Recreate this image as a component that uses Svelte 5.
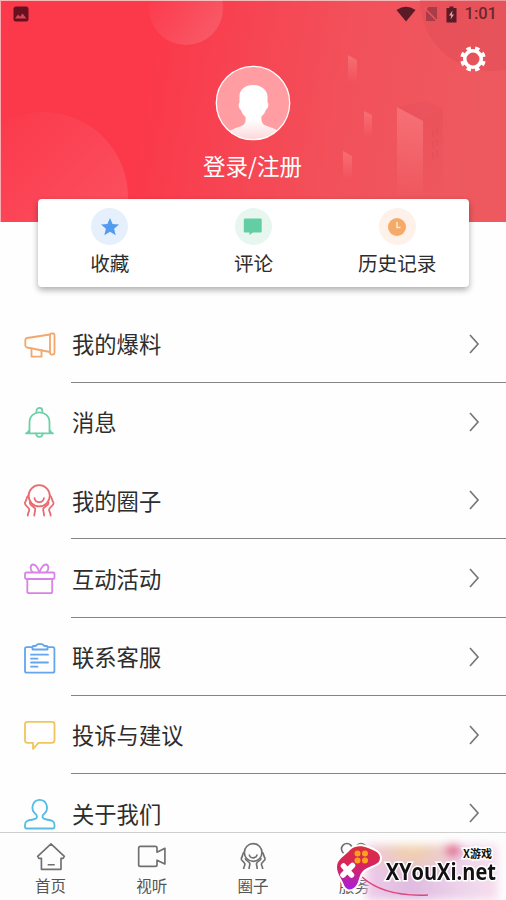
<script lang="ts">
  type Row = { icon: string; label: string; color: string; divider: boolean };

  const shortcuts = [
    { icon: 'star', label: '收藏', tint: 'blue' },
    { icon: 'comment', label: '评论', tint: 'green' },
    { icon: 'clock', label: '历史记录', tint: 'orange' },
  ];

  const rows: Row[] = [
    { icon: 'horn', label: '我的爆料', color: '#f3a76c', divider: true },
    { icon: 'bell', label: '消息', color: '#6fcfa9', divider: false },
    { icon: 'circle', label: '我的圈子', color: '#ea6a72', divider: true },
    { icon: 'gift', label: '互动活动', color: '#d883e6', divider: true },
    { icon: 'clipboard', label: '联系客服', color: '#64a5ec', divider: true },
    { icon: 'bubble', label: '投诉与建议', color: '#efc55f', divider: true },
    { icon: 'person', label: '关于我们', color: '#57bce2', divider: false },
  ];

  const tabs = [
    { icon: 'home', label: '首页' },
    { icon: 'video', label: '视听' },
    { icon: 'circle', label: '圈子' },
    { icon: 'service', label: '服务' },
    { icon: 'more', label: '' },
  ];
</script>

{#snippet people()}
  <circle cx="18.2" cy="13.8" r="10.6" />
  <path d="M13.5 16.200c.8 5.300 8.600 5.300 9.400 0" />
  <path d="M7.500 13.500C5 15 6 18 4 20.500c-1.200 3 3.800 4 4.300 7 .2 2-1.500 3-1.500 6M8.800 20.500c-.3 3.500 4.800 3.500 5.400 6.500.2 2.500-.9 3.500-.9 6.500" />
  <path d="M28.900 13.500c2.500 1.500 1.500 4.500 3.500 7 1.200 3-3.800 4-4.300 7-.2 2 1.500 3 1.500 6M27.600 20.500c.3 3.500-4.800 3.500-5.400 6.500-.2 2.500.9 3.500.9 6.500" />
{/snippet}

<div class="screen">
  <header class="hero">
    <svg class="scenery" viewBox="0 0 506 222" aria-hidden="true">
      <defs>
        <linearGradient id="orb" x1="0" y1="0" x2="1" y2="1">
          <stop offset="0.1" stop-color="#fff" stop-opacity="0" />
          <stop offset="1" stop-color="#fff" stop-opacity="0.15" />
        </linearGradient>
        <linearGradient id="tower" x1="0" y1="0" x2="0" y2="1">
          <stop offset="0" stop-color="#ff9a9c" stop-opacity="0.4" />
          <stop offset="1" stop-color="#ff9a9c" stop-opacity="0" />
        </linearGradient>
        <linearGradient id="shade" x1="0" y1="0" x2="0" y2="1">
          <stop offset="0" stop-color="#d9434f" stop-opacity="0.22" />
          <stop offset="1" stop-color="#d9434f" stop-opacity="0" />
        </linearGradient>
      </defs>
      <circle cx="43" cy="197" r="85" fill="url(#orb)" />
      <circle cx="186" cy="8" r="37" fill="url(#orb)" />
      <circle cx="491" cy="0" r="71" fill="#d9434f" opacity="0.28" />
      <path d="M348 55l9 5v23h-9z" fill="url(#tower)" />
      <path d="M364 111l8 4v22h-8z" fill="url(#tower)" />
      <path d="M343 151l9 5v24h-9z" fill="url(#tower)" />
      <path d="M397 107l26 14v78h-26z" fill="url(#tower)" />
      <path d="M397 107l30-6 16 8-20 12z" fill="#e0505a" opacity="0.3" />
      <path d="M423 121l20-12v90h-20z" fill="url(#shade)" />
      <path d="M433 130v32M437 128v30" stroke="#d9434f" stroke-dasharray="7 4" opacity="0.4" />
    </svg>

    <div class="status">
      <svg class="shot" viewBox="0 0 16 16">
        <rect x="0.500" y="0.500" width="15" height="15" rx="2.500" fill="#67101f" />
        <path d="M2 12.500 5 8.500l2 2.300L9.500 7.500l4 5z" fill="#d44555" />
      </svg>
      <div class="signals">
        <svg width="20" height="16" viewBox="0 0 20 16">
          <path d="M0.500 4Q10-2.500 19.500 4L10 15.500z" fill="#5a1b26" />
        </svg>
        <svg width="14" height="16" viewBox="0 0 14 16">
          <path d="M4.500 1H13v14H2V4z" fill="#a83c48" />
          <path d="M0 1.500 13.500 15.500" stroke="#f05560" stroke-width="1.500" />
        </svg>
        <svg width="11" height="17" viewBox="0 0 11 17">
          <path d="M0.500 2H3.500V0.500h4V2h3v14.500h-10z" fill="#5a1b26" />
          <path d="M6.500 4.500 3 9.500h2.300l-.8 4L8 8.500H5.800z" fill="#f3a0a5" />
        </svg>
        <span class="time">1:01</span>
      </div>
    </div>

    <svg class="gear" viewBox="0 0 26 26">
      <circle cx="13" cy="13" r="8.300" />
      <!-- eight teeth -->
      <circle
        cx="13"
        cy="13"
        r="11"
        pathLength="80"
        stroke-dasharray="5.200 4.800"
        transform="rotate(10.800 13 13)"
      />
    </svg>

    <div class="profile">
      <svg class="avatar" viewBox="0 0 76 76">
        <defs>
          <clipPath id="face"><circle cx="38" cy="38" r="36.500" /></clipPath>
          <linearGradient id="body" x1="0" y1="0" x2="0" y2="1">
            <stop offset="0.600" stop-color="#fff" />
            <stop offset="1" stop-color="#fbd0d2" />
          </linearGradient>
        </defs>
        <circle cx="38" cy="38" r="36.500" fill="#ff9da3" />
        <path
          clip-path="url(#face)"
          d="M38 20c-8 0-14 5-13.500 12v6c-1.500.5-1 6 1.500 7 .8 3 2.500 5 4.500 7 .5 4-.5 7-3 8.500-5 2.500-10 3-14 6V78h50V66c-4-3-9-3.500-14-6-2.500-1.500-3.500-4.500-3-8.500 2-2 3.700-4 4.500-7 2.500-1 3-6.500 1.500-7v-6C52.500 25 46 20 38 20z"
          fill="url(#body)"
        />
        <circle cx="38" cy="38" r="36.700" fill="none" stroke="#fff" stroke-width="1.300" />
      </svg>
      <span class="login">登录/注册</span>
    </div>
  </header>

  <section class="card">
    {#each shortcuts as item}
      <div class="shortcut">
        <span class="badge {item.tint}">
          <svg viewBox="0 0 20 20" fill="currentColor">
            {#if item.icon === 'star'}
              <path d="M10 1l2.600 6 6.400.5-4.900 4.200 1.600 6.500L10 14.700l-5.700 3.500 1.600-6.500L1 7.500 7.400 7z" />
            {:else if item.icon === 'comment'}
              <path d="M2 1.500h15.500q1.200 0 1.200 1.200v11.500q0 1.200-1.200 1.200H10L6.500 18v-2.600H2q-1.200 0-1.200-1.200V2.700Q.8 1.500 2 1.500z" />
            {:else}
              <circle cx="10" cy="10" r="9" />
              <path d="M10 5v5.500h3.500" fill="none" stroke="#ffe9d4" stroke-width="1.600" />
            {/if}
          </svg>
        </span>
        <span class="caption">{item.label}</span>
      </div>
    {/each}
  </section>

  <main class="list">
    {#each rows as row}
      <div class="row">
        <svg class="row-icon" viewBox="0 0 36 36" stroke={row.color}>
          {#if row.icon === 'horn'}
            <path d="M29 8.500 6 12q-1.700.4-1.700 2v5.500q0 1.500 1.700 2L29 26" />
            <rect x="29" y="7.500" width="4.500" height="21" rx="1.500" />
            <path d="M10.500 22.500v8.200h10v-6.500" />
          {:else if row.icon === 'bell'}
            <path d="M8.500 29V18.500c0-13.500 20-13.500 20 0V29M5 29.300h27M5.500 29q2.500-.8 3-3.500M31.500 29q-2.500-.8-3-3.500" />
            <path d="M15.500 8.500V6.500c0-3.400 5.800-3.400 5.800 0v2M15 29.500c.5 4.600 6.300 4.600 6.800 0" />
          {:else if row.icon === 'circle'}
            {@render people()}
          {:else if row.icon === 'gift'}
            <rect x="4" y="12.500" width="29.500" height="6.500" rx="1.500" />
            <path d="M6.300 19v12.500q0 1.700 1.700 1.700h21.500q1.700 0 1.700-1.700V19" />
            <path d="M18.500 12.500C17 8 14.500 4.500 12 4.500s-3.500 5-.5 7.500M18.500 12.500C20 8 22.500 4.500 25 4.500s3.500 5 .5 7.500" />
          {:else if row.icon === 'clipboard'}
            <path d="M11 8.200H5.500Q4 8.200 4 10v22q0 1.700 1.700 1.700h26q1.700 0 1.700-1.700V10q0-1.800-1.700-1.800H27" />
            <path d="M11.500 10.500V8q0-1 1-1h2.300q1-2.200 4.200-2.200T23.200 7h2.300q1 0 1 1v2.500z" />
            <path d="M10 15.700h17M10 19.700h6.500M10 23.500h17M10 27.700h6.500" />
          {:else if row.icon === 'bubble'}
            <path d="M6.500 4.800h24.500q2.500 0 2.500 2.500v16q0 2.500-2.500 2.500H17.500L12 31.800v-6H6.500Q4 25.800 4 23.300v-16q0-2.500 2.500-2.500z" />
          {:else}
            <path d="M15.500 20C8 14.500 12 4.800 18.700 4.800S29.500 14.500 22 20c-1.500 3 .5 4 3.500 4.500 5.500.8 8 1.500 8 5.500v2q0 1.500-1.500 1.500H5.500Q4 33.500 4 32v-2c0-4 2.500-4.700 8-5.500 3-.5 5-1.500 3.500-4.500z" />
          {/if}
        </svg>
        <div class="row-body" class:divider={row.divider}>
          <span>{row.label}</span>
          <svg class="chevron" viewBox="0 0 12 22"><path d="M2 2l8 9-8 9" /></svg>
        </div>
      </div>
    {/each}
  </main>

  <nav class="tabs">
    {#each tabs as tab}
      <div class="tab">
        <svg viewBox="0 0 36 36">
          {#if tab.icon === 'home'}
            <path d="M18 3.500 34 18.500l-1.500 2.300H30V34H6.500V20.800H3.500L2 18.500zM14 28.500h8.500" />
          {:else if tab.icon === 'video'}
            <path d="M4 6.500h18q2 0 2 2v5l9.500-4.800v19L24 23v5.500q0 2-2 2H4q-2 0-2-2v-20q0-2 2-2z" />
          {:else if tab.icon === 'circle'}
            {@render people()}
          {:else if tab.icon === 'service'}
            <circle cx="9.500" cy="9.500" r="6.500" />
            <circle cx="26.500" cy="9.500" r="6.500" />
            <circle cx="9.500" cy="26.500" r="6.500" />
            <circle cx="26.500" cy="26.500" r="6.500" />
          {/if}
        </svg>
        <span>{tab.label}</span>
      </div>
    {/each}

    <div class="brand">
      <div class="glow"></div>
      <svg class="pad" viewBox="0 0 170 60">
        <defs>
          <linearGradient id="padfill" x1="0.300" y1="0" x2="0.300" y2="1">
            <stop offset="0" stop-color="#dc2f3c" />
            <stop offset="0.500" stop-color="#d52364" />
            <stop offset="1" stop-color="#a320e2" />
          </linearGradient>
        </defs>
        <path d="M26 35Q48 55 92 53" fill="none" stroke="#df467c" stroke-width="1.500" />
        <path
          d="M14 8C18 4 25 3 32 6c7 2.500 12 5 12 10 0 7-9 7-16 12-6 5-4 12-9 17-4 4-9 3-11-2-2-6-7-11-7-18C1 17 9 14 14 8z"
          fill="url(#padfill)"
          stroke="#fff"
          stroke-width="4"
          paint-order="stroke"
        />
        <path d="M7.500 24l8 9M16.500 23.500 7 33" stroke="#fff" stroke-width="5.500" stroke-linecap="round" />
        <g fill="#ffa21a">
          <circle cx="21.500" cy="11.500" r="3" />
          <circle cx="29" cy="11.500" r="3" />
          <circle cx="21.500" cy="18.500" r="3" />
          <circle cx="29" cy="18.500" r="3" />
        </g>
      </svg>
      <div class="brand-text">
        <span class="brand-small">X游戏</span>
        <span class="brand-name">XYouXi.net</span>
      </div>
    </div>
  </nav>
</div>

<style>
  :global(body) {
    background: #fff;
  }

  .screen {
    width: 506px;
    height: 900px;
    overflow: hidden;
    display: flex;
    flex-direction: column;
    box-sizing: border-box;
    background: #fefefe;
    color: #2d2d2d;
    font-family: 'Noto Sans CJK SC', sans-serif;
  }

  svg {
    display: block;
    flex: none;
  }

  .hero {
    position: relative;
    flex: none;
    height: 222px;
    box-sizing: border-box;
    border-top: 1px solid #f5b9b8;
    border-left: 1px solid #f7a9b0;
    background: linear-gradient(100deg, #fb394b 30%, #f2505a 65%, #ee595f 90%);
  }

  .scenery {
    position: absolute;
    left: -1px;
    top: -1px;
    width: 506px;
    height: 222px;
  }

  .status {
    position: relative;
    display: flex;
    justify-content: space-between;
    align-items: center;
    height: 26px;
    padding: 0 9px 0 12px;
  }

  .shot {
    width: 16px;
    height: 16px;
  }

  .signals {
    display: flex;
    align-items: center;
    gap: 8px;
  }

  .time {
    font: 500 16.5px/20px Roboto, sans-serif;
    color: #6b2630;
  }

  .gear {
    position: absolute;
    right: 20px;
    top: 45px;
    width: 26px;
    height: 26px;
    fill: none;
    stroke: #fff;
    stroke-width: 3.600;
  }

  .profile {
    position: relative;
    display: flex;
    flex-direction: column;
    align-items: center;
    padding: 38px 2px 0 0;
  }

  .avatar {
    width: 76px;
    height: 76px;
  }

  .login {
    margin-top: 8px;
    font-size: 22.5px;
    line-height: 32px;
    color: #fff;
  }

  .card {
    position: relative;
    flex: none;
    display: grid;
    grid-template-columns: repeat(3, 1fr);
    height: 87.500px;
    margin: -23px 37px 0 38px;
    background: #fff;
    border-radius: 4px;
    box-shadow: 0 3px 6px rgba(0, 0, 0, 0.32);
  }

  .shortcut {
    display: flex;
    flex-direction: column;
    align-items: center;
    padding-top: 9px;
  }

  .badge {
    display: flex;
    align-items: center;
    justify-content: center;
    width: 37px;
    height: 37px;
    border-radius: 50%;
  }

  .badge svg {
    width: 20px;
    height: 20px;
  }

  .blue {
    color: #529cf0;
    background: #e6f0fc;
  }

  .green {
    color: #63cda4;
    background: #e7f7f0;
  }

  .orange {
    color: #f5aa68;
    background: #fdf1e9;
  }

  .caption {
    margin-top: 4px;
    font-size: 19.6px;
    line-height: 28px;
  }

  .list {
    flex: 1;
    min-height: 0;
    overflow: hidden;
    padding-top: 18px;
  }

  .row {
    display: flex;
    align-items: center;
    height: 78.250px;
    padding-left: 21px;
  }

  .row-icon {
    width: 36px;
    height: 36px;
    margin-right: 14px;
    fill: none;
    stroke-width: 1.800;
    stroke-linejoin: round;
    stroke-linecap: round;
  }

  .row-body {
    flex: 1;
    display: flex;
    align-items: center;
    justify-content: space-between;
    height: 100%;
    box-sizing: border-box;
    padding: 0 26px 0 1px;
    border-bottom: 1px solid transparent;
    font-size: 22.300px;
  }

  .divider {
    border-bottom-color: #858585;
  }

  .chevron {
    width: 12px;
    height: 22px;
    margin-top: 1px;
    fill: none;
    stroke: #777;
    stroke-width: 1.700;
  }

  .tabs {
    position: relative;
    flex: none;
    display: grid;
    grid-template-columns: repeat(5, 1fr);
    height: 68px;
    box-sizing: border-box;
    border-top: 1px solid #cfcfcf;
    background: #fdfdfd;
  }

  .tab {
    display: flex;
    flex-direction: column;
    align-items: center;
    padding-top: 8px;
    font-size: 15.500px;
    line-height: 22px;
    color: #555;
  }

  .tab svg {
    width: 30px;
    height: 30px;
    margin-bottom: 3px;
    fill: none;
    stroke: #707070;
    stroke-width: 2;
    stroke-linejoin: round;
  }

  /* site mark floating over the last two tabs */
  .brand {
    position: absolute;
    right: 0;
    top: 3px;
    width: 170px;
    height: 64px;
  }

  .glow {
    position: absolute;
    inset: 9px 8px 0 30px;
    background:
      radial-gradient(circle at 66% 8%, #e2668a 0 5px, transparent 9px),
      radial-gradient(ellipse at 35% 8%, #f4d3a8, transparent 42%),
      linear-gradient(90deg, #efcbe9, #dfbbe0 35%, #ecd2ea 70%, #f7dfee);
    filter: blur(4px);
  }

  .pad {
    position: absolute;
    left: 0;
    top: 6px;
    width: 170px;
    height: 60px;
  }

  .brand-text {
    position: absolute;
    right: 10px;
    top: 9px;
    display: flex;
    flex-direction: column;
    align-items: flex-end;
  }

  .brand-text span {
    color: #111;
    font-weight: 700;
    white-space: nowrap;
    -webkit-text-stroke: 3px #fff;
    paint-order: stroke fill;
  }

  .brand-small {
    margin-right: 4px;
    font-size: 11px;
    line-height: 16px;
  }

  .brand-name {
    font-family: 'Open Sans', sans-serif;
    font-size: 22.500px;
    line-height: 22px;
    transform: scaleX(0.890);
    transform-origin: right;
  }
</style>
